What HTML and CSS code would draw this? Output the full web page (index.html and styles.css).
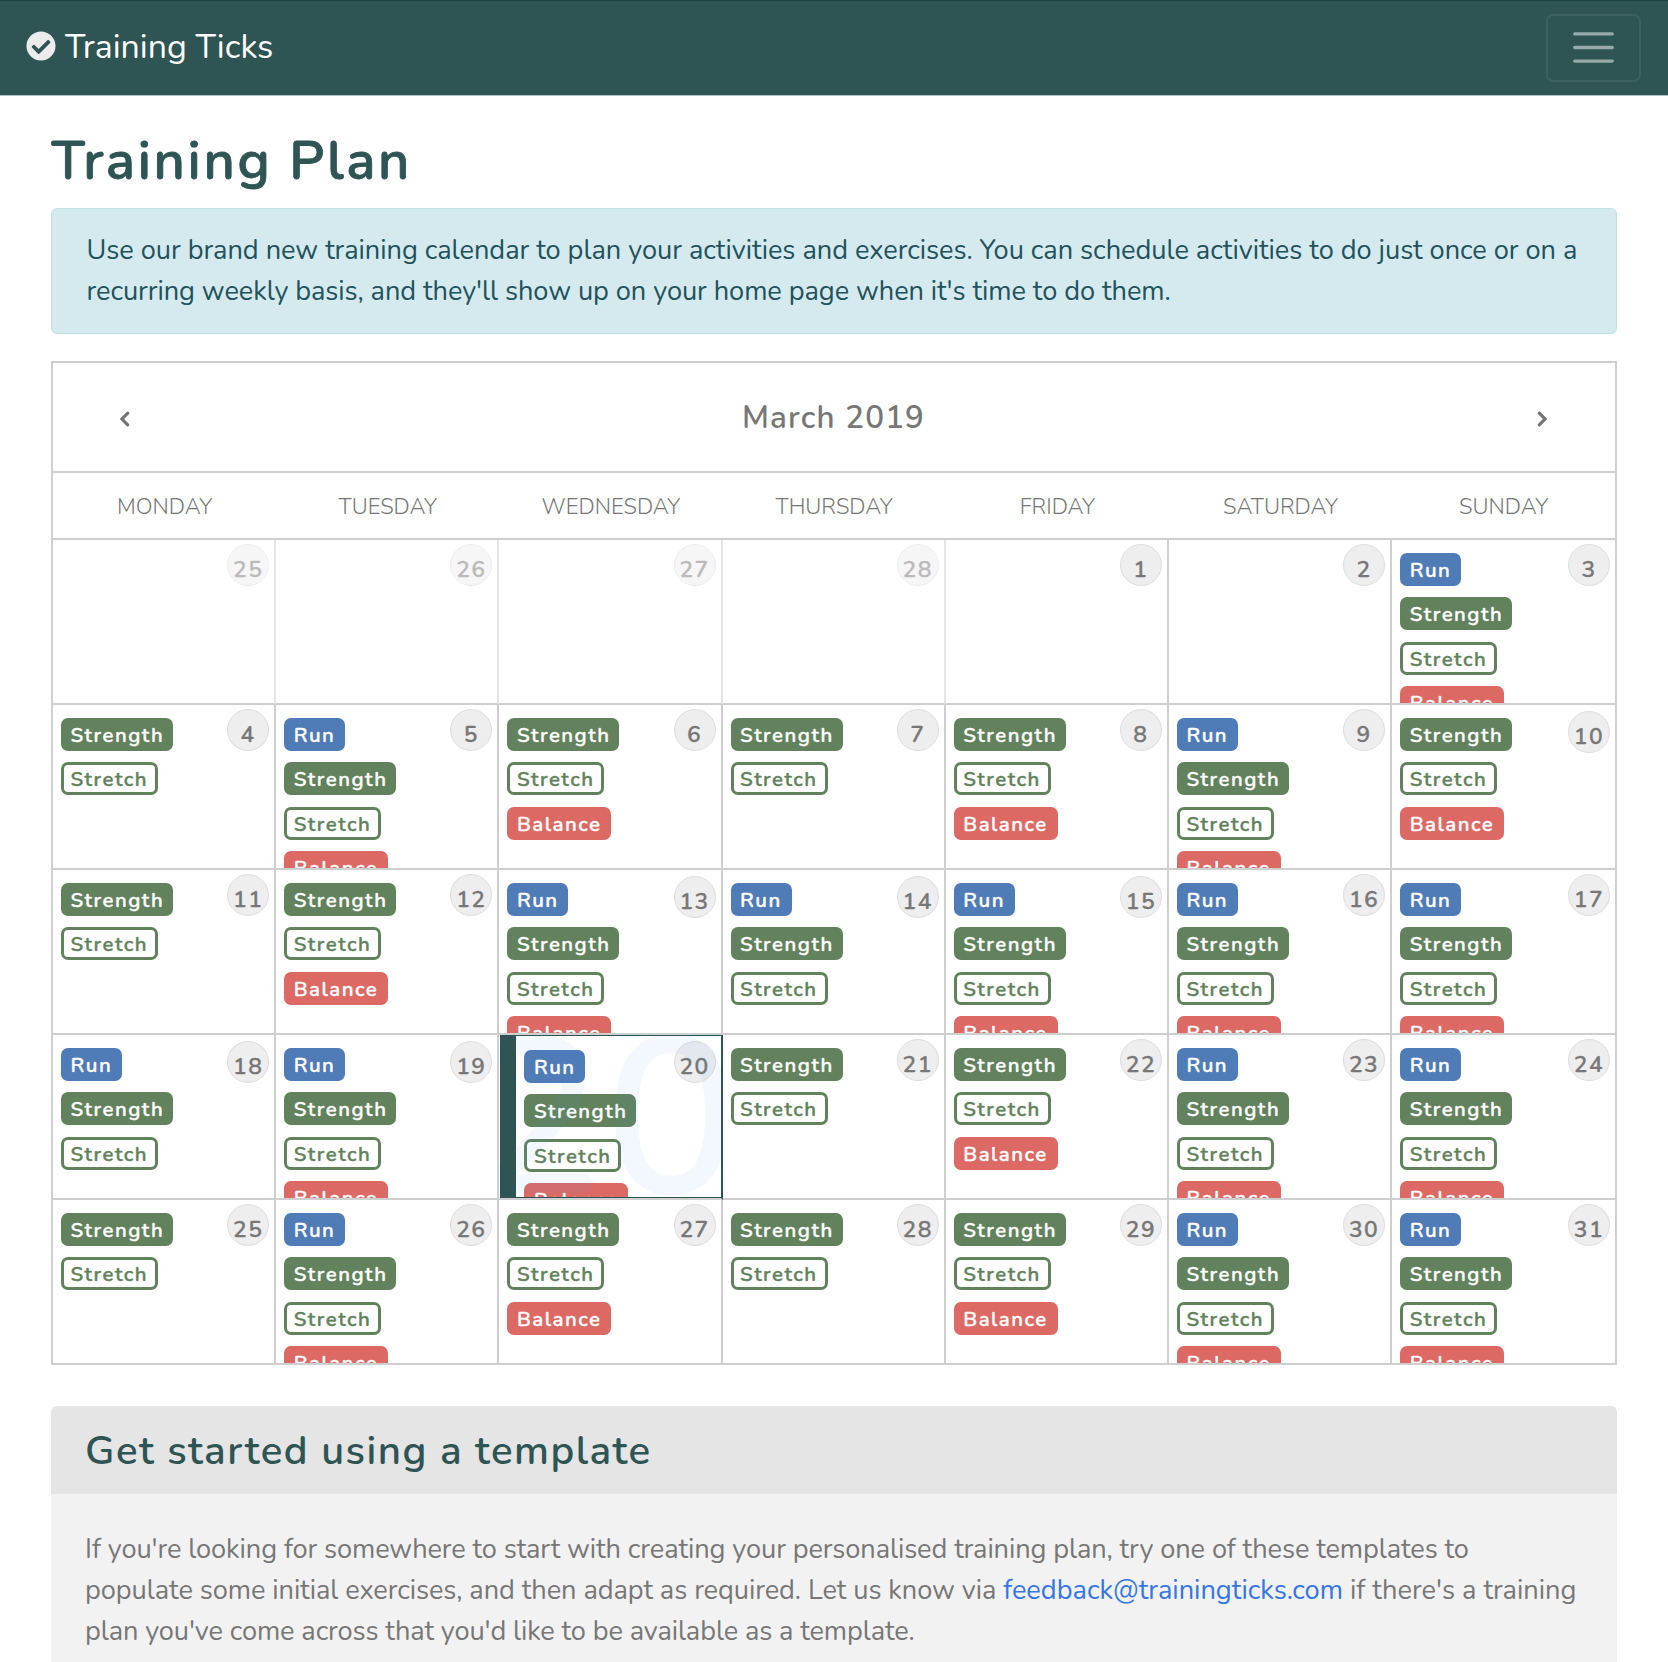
FILE: index.html
```html
<!DOCTYPE html>
<html lang="en">
<head>
<meta charset="utf-8">
<title>Training Plan - Training Ticks</title>
<link rel="stylesheet" href="styles.css">
</head>
<body>
<header class="navbar">
  <a class="brand">
    <svg class="brand-icon" viewBox="0 0 512 512"><path fill="#ececec" d="M504 256c0 136.967-111.033 248-248 248S8 392.967 8 256 119.033 8 256 8s248 111.033 248 248zM227.314 387.314l184-184c6.248-6.248 6.248-16.379 0-22.627l-22.627-22.627c-6.248-6.249-16.379-6.249-22.628 0L216 308.118l-70.059-70.059c-6.248-6.248-16.379-6.248-22.628 0l-22.627 22.627c-6.248 6.248-6.248 16.379 0 22.627l104 104c6.249 6.249 16.379 6.249 22.628.001z"/></svg>
    <span class="brand-name">Training Ticks</span>
  </a>
  <button class="toggler" aria-label="Menu">
    <svg viewBox="0 0 30 30"><path stroke="rgba(255,255,255,.5)" stroke-width="2" stroke-linecap="round" stroke-miterlimit="10" d="M4 7h22M4 15h22M4 23h22"/></svg>
  </button>
</header>
<main class="page">
  <h1>Training Plan</h1>
  <p class="alert"><span class="l1">Use our brand new training calendar to plan your activities and exercises. You can schedule activities to do just once or on a</span><br><span class="l2">recurring weekly basis, and they'll show up on your home page when it's time to do them.</span></p>

  <section class="calendar">
    <div class="cal-head">
      <svg class="chev" viewBox="0 0 11 16"><path d="M8.7 2.2L3 8l5.700 5.800"/></svg>
      <h3>March 2019</h3>
      <svg class="chev" viewBox="0 0 11 16"><path d="M2.300 2.200L8 8l-5.700 5.800"/></svg>
    </div>
    <div class="weekdays"><span>MONDAY</span><span>TUESDAY</span><span>WEDNESDAY</span><span>THURSDAY</span><span>FRIDAY</span><span>SATURDAY</span><span>SUNDAY</span></div>
    <div class="days">
      <div class="day out"><i class="num">25</i></div>
      <div class="day out"><i class="num">26</i></div>
      <div class="day out"><i class="num">27</i></div>
      <div class="day out"><i class="num">28</i></div>
      <div class="day"><i class="num">1</i></div>
      <div class="day"><i class="num">2</i></div>
      <div class="day"><i class="num">3</i><b class="run">Run</b><b class="strength">Strength</b><b class="stretch">Stretch</b><b class="balance">Balance</b></div>

      <div class="day"><i class="num">4</i><b class="strength">Strength</b><b class="stretch">Stretch</b></div>
      <div class="day"><i class="num">5</i><b class="run">Run</b><b class="strength">Strength</b><b class="stretch">Stretch</b><b class="balance">Balance</b></div>
      <div class="day"><i class="num">6</i><b class="strength">Strength</b><b class="stretch">Stretch</b><b class="balance">Balance</b></div>
      <div class="day"><i class="num">7</i><b class="strength">Strength</b><b class="stretch">Stretch</b></div>
      <div class="day"><i class="num">8</i><b class="strength">Strength</b><b class="stretch">Stretch</b><b class="balance">Balance</b></div>
      <div class="day"><i class="num">9</i><b class="run">Run</b><b class="strength">Strength</b><b class="stretch">Stretch</b><b class="balance">Balance</b></div>
      <div class="day"><i class="num low">10</i><b class="strength">Strength</b><b class="stretch">Stretch</b><b class="balance">Balance</b></div>

      <div class="day"><i class="num">11</i><b class="strength">Strength</b><b class="stretch">Stretch</b></div>
      <div class="day"><i class="num">12</i><b class="strength">Strength</b><b class="stretch">Stretch</b><b class="balance">Balance</b></div>
      <div class="day"><i class="num low">13</i><b class="run">Run</b><b class="strength">Strength</b><b class="stretch">Stretch</b><b class="balance">Balance</b></div>
      <div class="day"><i class="num low">14</i><b class="run">Run</b><b class="strength">Strength</b><b class="stretch">Stretch</b></div>
      <div class="day"><i class="num low">15</i><b class="run">Run</b><b class="strength">Strength</b><b class="stretch">Stretch</b><b class="balance">Balance</b></div>
      <div class="day"><i class="num">16</i><b class="run">Run</b><b class="strength">Strength</b><b class="stretch">Stretch</b><b class="balance">Balance</b></div>
      <div class="day"><i class="num">17</i><b class="run">Run</b><b class="strength">Strength</b><b class="stretch">Stretch</b><b class="balance">Balance</b></div>

      <div class="day"><i class="num low">18</i><b class="run">Run</b><b class="strength">Strength</b><b class="stretch">Stretch</b></div>
      <div class="day"><i class="num low">19</i><b class="run">Run</b><b class="strength">Strength</b><b class="stretch">Stretch</b><b class="balance">Balance</b></div>
      <div class="day today"><i class="num low">20</i><b class="run">Run</b><b class="strength">Strength</b><b class="stretch">Stretch</b><b class="balance">Balance</b><span class="ghost">20</span></div>
      <div class="day"><i class="num">21</i><b class="strength">Strength</b><b class="stretch">Stretch</b></div>
      <div class="day"><i class="num">22</i><b class="strength">Strength</b><b class="stretch">Stretch</b><b class="balance">Balance</b></div>
      <div class="day"><i class="num">23</i><b class="run">Run</b><b class="strength">Strength</b><b class="stretch">Stretch</b><b class="balance">Balance</b></div>
      <div class="day"><i class="num">24</i><b class="run">Run</b><b class="strength">Strength</b><b class="stretch">Stretch</b><b class="balance">Balance</b></div>

      <div class="day"><i class="num">25</i><b class="strength">Strength</b><b class="stretch">Stretch</b></div>
      <div class="day"><i class="num">26</i><b class="run">Run</b><b class="strength">Strength</b><b class="stretch">Stretch</b><b class="balance">Balance</b></div>
      <div class="day"><i class="num">27</i><b class="strength">Strength</b><b class="stretch">Stretch</b><b class="balance">Balance</b></div>
      <div class="day"><i class="num">28</i><b class="strength">Strength</b><b class="stretch">Stretch</b></div>
      <div class="day"><i class="num">29</i><b class="strength">Strength</b><b class="stretch">Stretch</b><b class="balance">Balance</b></div>
      <div class="day"><i class="num">30</i><b class="run">Run</b><b class="strength">Strength</b><b class="stretch">Stretch</b><b class="balance">Balance</b></div>
      <div class="day"><i class="num">31</i><b class="run">Run</b><b class="strength">Strength</b><b class="stretch">Stretch</b><b class="balance">Balance</b></div>
    </div>
  </section>

  <section class="card">
    <h2>Get started using a template</h2>
    <p><span class="l3">If you're looking for somewhere to start with creating your personalised training plan, try one of these templates to</span><br><span class="l4">populate some initial exercises, and then adapt as required. Let us know via </span><a>feedback@trainingticks.com</a> if there's a training<br><span class="l5">plan you've come across that you'd like to be available as a template.</span></p>
  </section>
</main>
</body>
</html>
```
FILE: styles.css
```css
* { box-sizing: border-box; }
html { overflow: hidden; }
body {
  margin: 0;
  height: 1662px;
  overflow: hidden;
  background: #fff;
  color: #777;
  font-family: Nunito, Lato, "Open Sans", sans-serif;
  font-size: 27.2px;
  line-height: 41px;
}
h1, h2, h3, p { margin: 0; }

.navbar {
  height: 96px;
  padding: 0 27px 0 26px;
  display: flex;
  justify-content: space-between;
  align-items: center;
  background: #2e5453;
  border-top: 1px solid #1d4140;
  border-bottom: 1px solid #a9c3c8;
}
.brand { display: flex; align-items: center; gap: 9px; color: #fff; }
.brand-icon { width: 30px; height: 30px; margin-top: -4px; }
.brand-name { font-size: 33.900px; font-weight: 400; margin-top: -2px; white-space: nowrap; }
.toggler {
  width: 95px; height: 68px;
  padding: 0 0 1px;
  display: flex; align-items: center; justify-content: center;
  background: none;
  border: 2px solid #3c605f;
  border-radius: 7px;
}
.toggler svg { width: 51px; height: 51px; }

.page { padding: 0 51px; }
h1 {
  height: 112px;
  padding: 32px 0 0 .5px;
  color: #2e5453;
  font-size: 54.4px;
  font-weight: 600;
  letter-spacing: 2.650px;
  line-height: 66px;
  -webkit-text-stroke: .8px #2e5453;
}
.alert {
  height: 126px;
  padding: 21px 0 0 34.5px;
  white-space: nowrap;
  color: #22525c;
  background: #d5eaee;
  border: 1px solid #c3e0e5;
  border-radius: 6px;
}
.l1 { letter-spacing: -.034px; }
.l2 { letter-spacing: -.07px; }
.l3 { letter-spacing: -.1px; }
.l4 { letter-spacing: -.075px; }
.l5 { letter-spacing: -.12px; }

.calendar {
  margin-top: 27px;
  border: 2px solid #cfcfcf;
  border-bottom: 0;
}
.cal-head {
  height: 110px;
  padding: 0 67px 0 66px;
  display: flex; align-items: center; justify-content: space-between;
  border-bottom: 2px solid #cfcfcf;
}
h3 { font-size: 31.300px; font-weight: 600; letter-spacing: 1.200px; }
.chev { width: 11px; height: 16px; margin-top: 4px; fill: none; stroke: #747474; stroke-width: 3.200; stroke-linecap: round; }
.weekdays, .days { display: grid; grid-template-columns: repeat(6, 223.200px) 1fr; }
.weekdays {
  height: 67px;
  line-height: 68px;
  font-size: 22.100px;
  font-weight: 300;
  text-align: center;
  border-bottom: 2px solid #cfcfcf;
}
.days { grid-auto-rows: 165px; }
.day {
  position: relative;
  overflow: hidden;
  padding: 13.200px 0 0 8px;
  display: flex; flex-direction: column; gap: 11.300px;
  border-right: 2px solid #cfcfcf;
  border-bottom: 2px solid #cfcfcf;
}
.day:nth-child(7n) { border-right: 0; }
.day.out { border-right-color: #e5e5e5; }
.day b {
  flex: none;
  height: 33px;
  padding-left: 6.500px;
  border: 3px solid;
  border-radius: 7px;
  color: #fff;
  font-size: 20.400px;
  font-weight: 600;
  line-height: 28px;
  letter-spacing: 1.500px;
  -webkit-text-stroke: .35px;
  white-space: nowrap;
}
.day .run { width: 61px; background: #4f7bb7; border-color: #4f7bb7; }
.day .strength { width: 112px; background: #62825d; border-color: #62825d; }
.day .stretch { width: 97px; background: #fff; border-color: #62825d; color: #62825d; }
.day .balance { width: 104px; background: #dd6965; border-color: #dd6965; }

.num {
  position: absolute; top: 4px; right: 5px;
  width: 42px; height: 42px;
  border-radius: 50%;
  background: #eee;
  border: 1px solid #dedede;
  color: #777;
  font-style: normal; font-size: 22.800px; font-weight: 600;
  line-height: 49px; letter-spacing: 1.500px; text-align: center;
  -webkit-text-stroke: .3px;
}
.num.low { top: 5.500px; }
.out .num { opacity: .5; }

.today { padding: 15px 0 0 25px; border-right-color: #2e5453; }
.today::before {
  content: "";
  position: absolute; inset: 0 0 0 1px;
  border: solid #2e5453;
  border-width: 1px 0 1px 16px;
  z-index: 2;
}
.ghost {
  position: absolute; right: -18px; top: 2px;
  font-size: 224px; font-weight: 600; line-height: 166px;
  color: rgba(60, 150, 225, .065);
}

.card {
  margin-top: 41px;
  height: 270px;
  background: #f2f2f2;
  border-radius: 6px;
  overflow: hidden;
}
h2 {
  height: 88px;
  padding-left: 34px;
  line-height: 89px;
  background: #e5e5e5;
  color: #2e5453;
  font-size: 40.300px; font-weight: 600; letter-spacing: 1.450px;
}
.card p { padding: 35px 0 0 34px; white-space: nowrap; }
.card a { color: #3577e5; }
```
